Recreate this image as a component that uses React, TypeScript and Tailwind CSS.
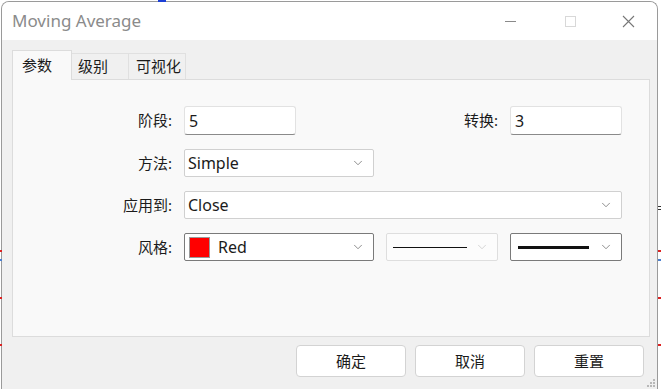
import { ChevronDown } from "lucide-react";

const cjk = "font-['Noto_Sans','Noto_Sans_CJK_SC',sans-serif]";

function Chevron({ faint }: { faint?: boolean }) {
  return (
    <ChevronDown
      size={14}
      strokeWidth={1.2}
      className={faint ? "text-[#c4c4c4]" : "text-[#606060]"}
    />
  );
}

function Label({ children }: { children: string }) {
  return (
    <div className="w-[159px] shrink-0 text-right text-[15px] leading-none text-[#1b1b1b]">{children}</div>
  );
}

function TextBox({ value, width }: { value: string; width: string }) {
  return (
    <div
      className={`${width} flex h-[29px] items-center rounded-[3px] border border-[#e2e2e2] border-b-[#8a8a8a] bg-white px-[4px] text-[16px] text-[#1b1b1b]`}
    >
      {value}
    </div>
  );
}

function Select({
  width,
  children,
  dark,
  faint,
}: {
  width: string;
  children: React.ReactNode;
  dark?: boolean;
  faint?: boolean;
}) {
  return (
    <div
      className={`${width} flex h-[28px] items-center justify-between rounded-[2px] border ${
        dark ? "border-[#7a7a7a]" : faint ? "border-[#dedede] bg-[#fcfcfc]" : "border-[#d0d0d0]"
      } ${faint ? "" : "bg-white"} pl-[2px] pr-[8px] text-[16px] text-[#1b1b1b]`}
    >
      <div className="flex min-w-0 flex-1 items-center">{children}</div>
      <Chevron faint={faint} />
    </div>
  );
}

export default function App() {
  const tabs = [
    { t: "级别", cls: "w-[57px] pl-[6px]" },
    { t: "可视化", cls: "w-[57px] pl-[7px]" },
  ];
  return (
    <div className={`relative h-[389px] w-[661px] overflow-hidden bg-white ${cjk}`}>
      {/* chart marks peeking behind the dialog */}
      <span className="absolute left-[158px] top-0 h-[2px] w-[8px] bg-[#1c3fd6]" />
      <span className="absolute left-0 top-[250px] h-[2px] w-[2px] bg-[#d22]" />
      <span className="absolute left-0 top-[259px] h-[2px] w-[2px] bg-[#4a7fd0]" />
      <span className="absolute left-0 top-[297px] h-[2px] w-[2px] bg-[#d22]" />
      <span className="absolute left-0 top-[344px] h-[2px] w-[2px] bg-[#d22]" />
      <span className="absolute right-0 top-[250px] h-[2px] w-[3px] bg-[#d22]" />
      <span className="absolute right-0 top-[259px] h-[2px] w-[3px] bg-[#4a7fd0]" />
      <span className="absolute right-0 top-[297px] h-[2px] w-[3px] bg-[#d22]" />
      <span className="absolute right-0 top-[344px] h-[2px] w-[3px] bg-[#d22]" />
      <span className="absolute right-0 top-[206px] h-[1px] w-[3px] bg-[#333]" />
      <span className="absolute right-0 top-[209px] h-[1px] w-[3px] bg-[#333]" />

      <div className="ml-[1px] mt-[1px] flex h-[388px] w-[657px] flex-col overflow-hidden rounded-t-[8px] border border-b-0 border-[#9a9a9a] bg-[#f0f0f0]">
        {/* title bar */}
        <div className="flex h-[38px] shrink-0 items-center bg-white">
          <div className="ml-[10px] flex-1 text-[17px] text-[#8b8b8b]">Moving Average</div>
          <div className="flex h-full items-center">
            <div className="flex w-[46px] justify-center">
              <span className="h-px w-[11px] bg-[#8a8a8a]" />
            </div>
            <div className="ml-[14px] flex w-[46px] justify-center">
              <span className="h-[11px] w-[11px] border border-[#d8d8d8]" />
            </div>
            <div className="ml-[12px] mr-[6px] flex w-[46px] justify-center">
              <svg width="13" height="13" viewBox="0 0 13 13">
                <path d="M1 1L12 12M12 1L1 12" stroke="#777" strokeWidth="1.1" />
              </svg>
            </div>
          </div>
        </div>

        {/* tabs */}
        <div className="mt-[10px] flex h-[29px] items-end pl-[10px]">
          <div className="relative z-10 -mb-px flex h-[30px] w-[60px] items-center border border-b-0 border-[#dcdcdc] bg-[#f9f9f9] pl-[9px] text-[15px] text-[#1b1b1b]">
            参数
          </div>
          {tabs.map(({ t, cls }) => (
            <div
              key={t}
              className={`${cls} flex h-[26px] items-center border border-b-0 border-l-0 border-[#e0e0e0] bg-[#f0f0f0] text-[15px] text-[#1b1b1b]`}
            >
              {t}
            </div>
          ))}
        </div>

        {/* panel */}
        <div className="ml-[10px] mr-[7px] flex h-[258px] flex-col gap-[14px] border border-[#dcdcdc] bg-[#f9f9f9] pr-[27px] pt-[26px]">
          <div className="flex items-center gap-[12px]">
            <Label>阶段:</Label>
            <TextBox value="5" width="w-[112px]" />
            <div className="flex-1 text-right text-[15px] text-[#1b1b1b]">转换:</div>
            <TextBox value="3" width="w-[112px]" />
          </div>
          <div className="flex items-center gap-[12px]">
            <Label>方法:</Label>
            <Select width="w-[190px]">
              <span className="pl-px">Simple</span>
            </Select>
          </div>
          <div className="flex items-center gap-[12px]">
            <Label>应用到:</Label>
            <Select width="w-[438px]">
              <span className="pl-px">Close</span>
            </Select>
          </div>
          <div className="flex items-center gap-[12px]">
            <Label>风格:</Label>
            <Select width="w-[190px]" dark>
              <span className="ml-[2px] h-[21px] w-[21px] border border-[#9a9a9a] bg-[#ff0000]" />
              <span className="ml-[8px]">Red</span>
            </Select>
            <Select width="w-[113px]" faint>
              <span className="ml-[4px] mr-[8px] h-px flex-1 bg-[#111]" />
            </Select>
            <Select width="w-[112px]" dark>
              <span className="ml-[5px] mr-[10px] h-[3px] flex-1 bg-[#111]" />
            </Select>
          </div>
        </div>

        {/* buttons */}
        <div className="relative mt-[8px] flex justify-end gap-[9px] pr-[13px]">
          {["确定", "取消", "重置"].map((b) => (
            <button
              key={b}
              type="button"
              className="flex h-[32px] w-[110px] items-center justify-center rounded-[4px] border border-[#d3d3d3] bg-white text-[15px] text-[#1b1b1b]"
            >
              {b}
            </button>
          ))}
        </div>
        <div className="mr-[2px] mt-auto mb-[2px] grid grid-cols-3 gap-[1px] self-end">
          {[0, 1, 2, 3, 4, 5, 6, 7, 8].map((i) => (
            <span
              key={i}
              className={`h-[2px] w-[2px] ${[0, 1, 3].includes(i) ? "bg-transparent" : "bg-[#b8b8b8]"}`}
            />
          ))}
        </div>
      </div>
    </div>
  );
}
